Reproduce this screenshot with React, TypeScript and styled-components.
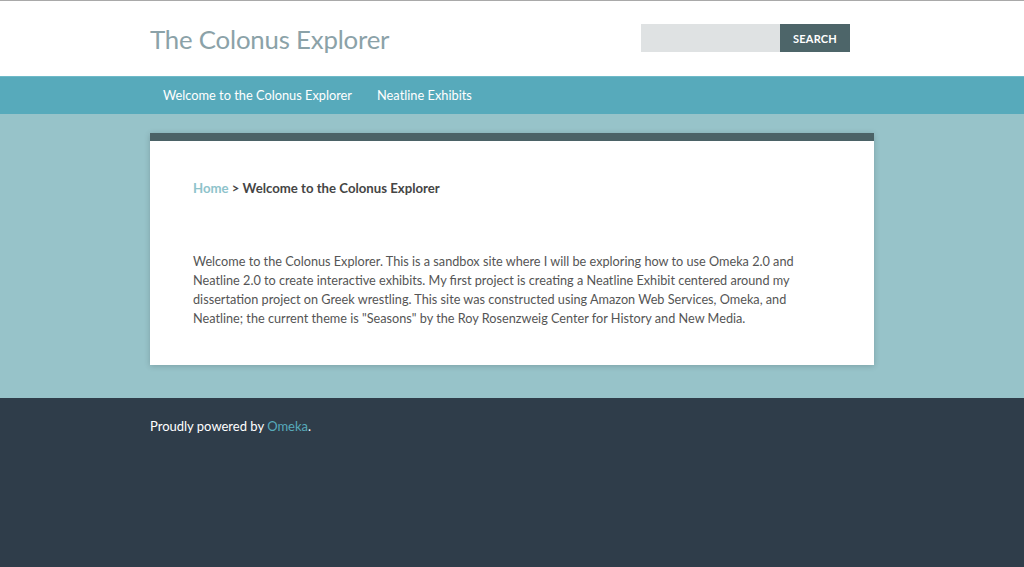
import React from "react";
import styled, { createGlobalStyle } from "styled-components";

const Global = createGlobalStyle`
  html, body { margin: 0; padding: 0; }
  body {
    font-family: Lato, "Open Sans", sans-serif;
    background: #2f3d4a;
    border-top: 1px solid #a9a9a9;
  }
`;

const Header = styled.header`
  background: #ffffff;
  height: 75px;
`;

const HeaderInner = styled.div`
  width: 724px;
  box-sizing: border-box;
  padding-right: 24px;
  margin: 0 auto;
  display: flex;
  align-items: center;
  justify-content: space-between;
  height: 100%;
`;

const SiteTitle = styled.h1`
  margin: 0 0 0 0;
  font-weight: 400;
  font-size: 25.8px;
  color: #8ba2a8;
  letter-spacing: -0.2px;
`;

const SearchForm = styled.form`
  display: flex;
  height: 28px;
  margin-bottom: 1px;
`;

const SearchInput = styled.input`
  width: 139px;
  height: 28px;
  box-sizing: border-box;
  border: none;
  background: #dfe2e3;
  padding: 0 8px;
  outline: none;
`;

const SearchButton = styled.button`
  width: 70px;
  height: 28px;
  border: none;
  background: #4d6569;
  color: #ffffff;
  font-family: inherit;
  font-weight: 700;
  font-size: 11px;
  letter-spacing: 0.2px;
  padding: 0;
`;

const Nav = styled.nav`
  background: #57aabb;
  border-top: 1px solid #6fbac8;
  height: 37px;
`;

const NavInner = styled.ul`
  width: 724px;
  margin: 0 auto;
  padding: 0 0 2px;
  box-sizing: border-box;
  list-style: none;
  display: flex;
  height: 100%;
  align-items: center;
`;

const NavItem = styled.li`
  padding: 0 12px 0 13px;
  color: #ffffff;
  font-size: 12.8px;
`;

const Main = styled.main`
  background: #97c3c9;
  padding: 19px 0 33px;
`;

const Card = styled.section`
  width: 724px;
  margin: 0 auto;
  box-sizing: border-box;
  background: #ffffff;
  border-top: 8px solid #4b6266;
  box-shadow: 0 1px 6px rgba(0, 0, 0, 0.18);
  padding: 39px 43px 37px;
`;

const Breadcrumb = styled.div`
  font-size: 13.2px;
  font-weight: 700;
  color: #454545;
  margin-bottom: 56px;
`;

const Crumb = styled.a`
  color: #8ec3cb;
  text-decoration: none;
`;

const Body = styled.p`
  margin: 0;
  font-size: 12.7px;
  line-height: 19px;
  color: #555555;
`;

const Footer = styled.footer`
  background: #2f3d4a;
  min-height: 169px;
`;

const FooterInner = styled.div`
  width: 724px;
  margin: 0 auto;
  padding-top: 20px;
  color: #ffffff;
  font-size: 13px;
`;

const FooterLink = styled.a`
  color: #57aabb;
  text-decoration: none;
`;

export default function App() {
  return (
    <>
      <Global />
      <Header>
        <HeaderInner>
          <SiteTitle>The Colonus Explorer</SiteTitle>
          <SearchForm onSubmit={(e) => e.preventDefault()}>
            <SearchInput type="text" aria-label="Search" />
            <SearchButton type="submit">SEARCH</SearchButton>
          </SearchForm>
        </HeaderInner>
      </Header>
      <Nav>
        <NavInner>
          <NavItem>Welcome to the Colonus Explorer</NavItem>
          <NavItem>Neatline Exhibits</NavItem>
        </NavInner>
      </Nav>
      <Main>
        <Card>
          <Breadcrumb>
            <Crumb href="#">Home</Crumb> &gt; Welcome to the Colonus Explorer
          </Breadcrumb>
          <Body>
            Welcome to the Colonus Explorer. This is a sandbox site where I will be exploring how to use Omeka 2.0 and
            Neatline 2.0 to create interactive exhibits. My first project is creating a Neatline Exhibit centered around my
            dissertation project on Greek wrestling. This site was constructed using Amazon Web Services, Omeka, and
            Neatline; the current theme is "Seasons" by the Roy Rosenzweig Center for History and New Media.
          </Body>
        </Card>
      </Main>
      <Footer>
        <FooterInner>
          Proudly powered by <FooterLink href="#">Omeka</FooterLink>.
        </FooterInner>
      </Footer>
    </>
  );
}
